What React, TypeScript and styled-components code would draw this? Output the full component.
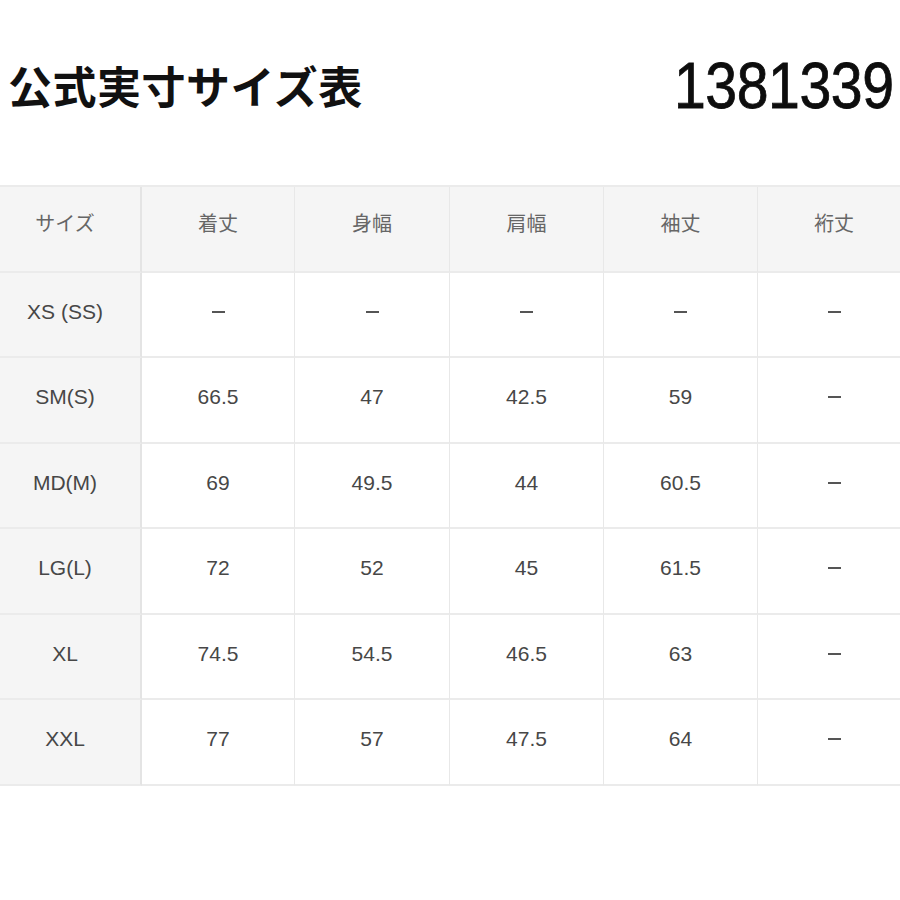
import { createGlobalStyle } from 'styled-components'
import styled from 'styled-components'

const GlobalStyle = createGlobalStyle`
  html, body {
    margin: 0;
    padding: 0;
    background: #ffffff;
  }
  body {
    font-family: "Liberation Sans", "Noto Sans CJK JP", sans-serif;
  }
`

const Page = styled.div`
  width: 900px;
  height: 900px;
  overflow: hidden;
  background: #ffffff;
`

const Header = styled.header`
  display: flex;
  align-items: center;
  justify-content: space-between;
  height: 120px;
  padding: 50px 6px 0 8px;
  box-sizing: border-box;
`

const Title = styled.h1`
  margin: 0;
  font-family: "Noto Sans CJK JP", sans-serif;
  font-size: 44px;
  font-weight: 700;
  letter-spacing: 0.5px;
  color: #111;
`

const Code = styled.div`
  font-family: "Liberation Sans", "DejaVu Sans", sans-serif;
  font-size: 65px;
  font-weight: 400;
  letter-spacing: -0.5px;
  color: #0d0d0d;
  transform: scaleX(0.88);
  transform-origin: right center;
  -webkit-text-stroke: 0.8px #0d0d0d;
`

const Table = styled.div`
  margin: 65px 0 0 -10px;
  width: 920px;
  display: grid;
  grid-template-columns: 152px 153px 155px 154px 154px 152px;
  grid-auto-rows: 85.5px;
  border-top: 2px solid #ebebeb;
`

const Cell = styled.div<{ $shade?: boolean; $head?: boolean }>`
  display: flex;
  align-items: center;
  justify-content: center;
  padding-bottom: ${(p) => (p.$head ? '12px' : '5px')};
  background: ${(p) => (p.$shade ? '#f5f5f5' : '#ffffff')};
  border-right: 1px solid #e8e8e8;
  border-bottom: 2px solid #ebebeb;
  box-sizing: border-box;
  font-family: "Liberation Sans", "Noto Sans CJK JP", sans-serif;
  font-size: 21px;
  color: #474747;

  &:nth-child(6n + 1) {
    border-right: 2px solid #e4e4e4;
  }
  &:nth-child(6n) {
    border-right: none;
  }
`

const HeadText = styled.span`
  font-family: "Noto Sans CJK JP", sans-serif;
  font-size: 20px;
  color: #666;
`

const Dash = styled.span`
  display: block;
  width: 13px;
  height: 2px;
  background: #555;
`

const heads = ['サイズ', '着丈', '身幅', '肩幅', '袖丈', '裄丈']

const rows: string[][] = [
  ['XS (SS)', '-', '-', '-', '-', '-'],
  ['SM(S)', '66.5', '47', '42.5', '59', '-'],
  ['MD(M)', '69', '49.5', '44', '60.5', '-'],
  ['LG(L)', '72', '52', '45', '61.5', '-'],
  ['XL', '74.5', '54.5', '46.5', '63', '-'],
  ['XXL', '77', '57', '47.5', '64', '-'],
]

export default function App() {
  return (
    <Page>
      <GlobalStyle />
      <Header>
        <Title>公式実寸サイズ表</Title>
        <Code>1381339</Code>
      </Header>
      <Table>
        {heads.map((h) => (
          <Cell key={h} $shade $head>
            <HeadText>{h}</HeadText>
          </Cell>
        ))}
        {rows.map((row) =>
          row.map((value, i) => (
            <Cell key={row[0] + i} $shade={i === 0}>
              {value === '-' ? <Dash /> : value}
            </Cell>
          )),
        )}
      </Table>
    </Page>
  )
}
